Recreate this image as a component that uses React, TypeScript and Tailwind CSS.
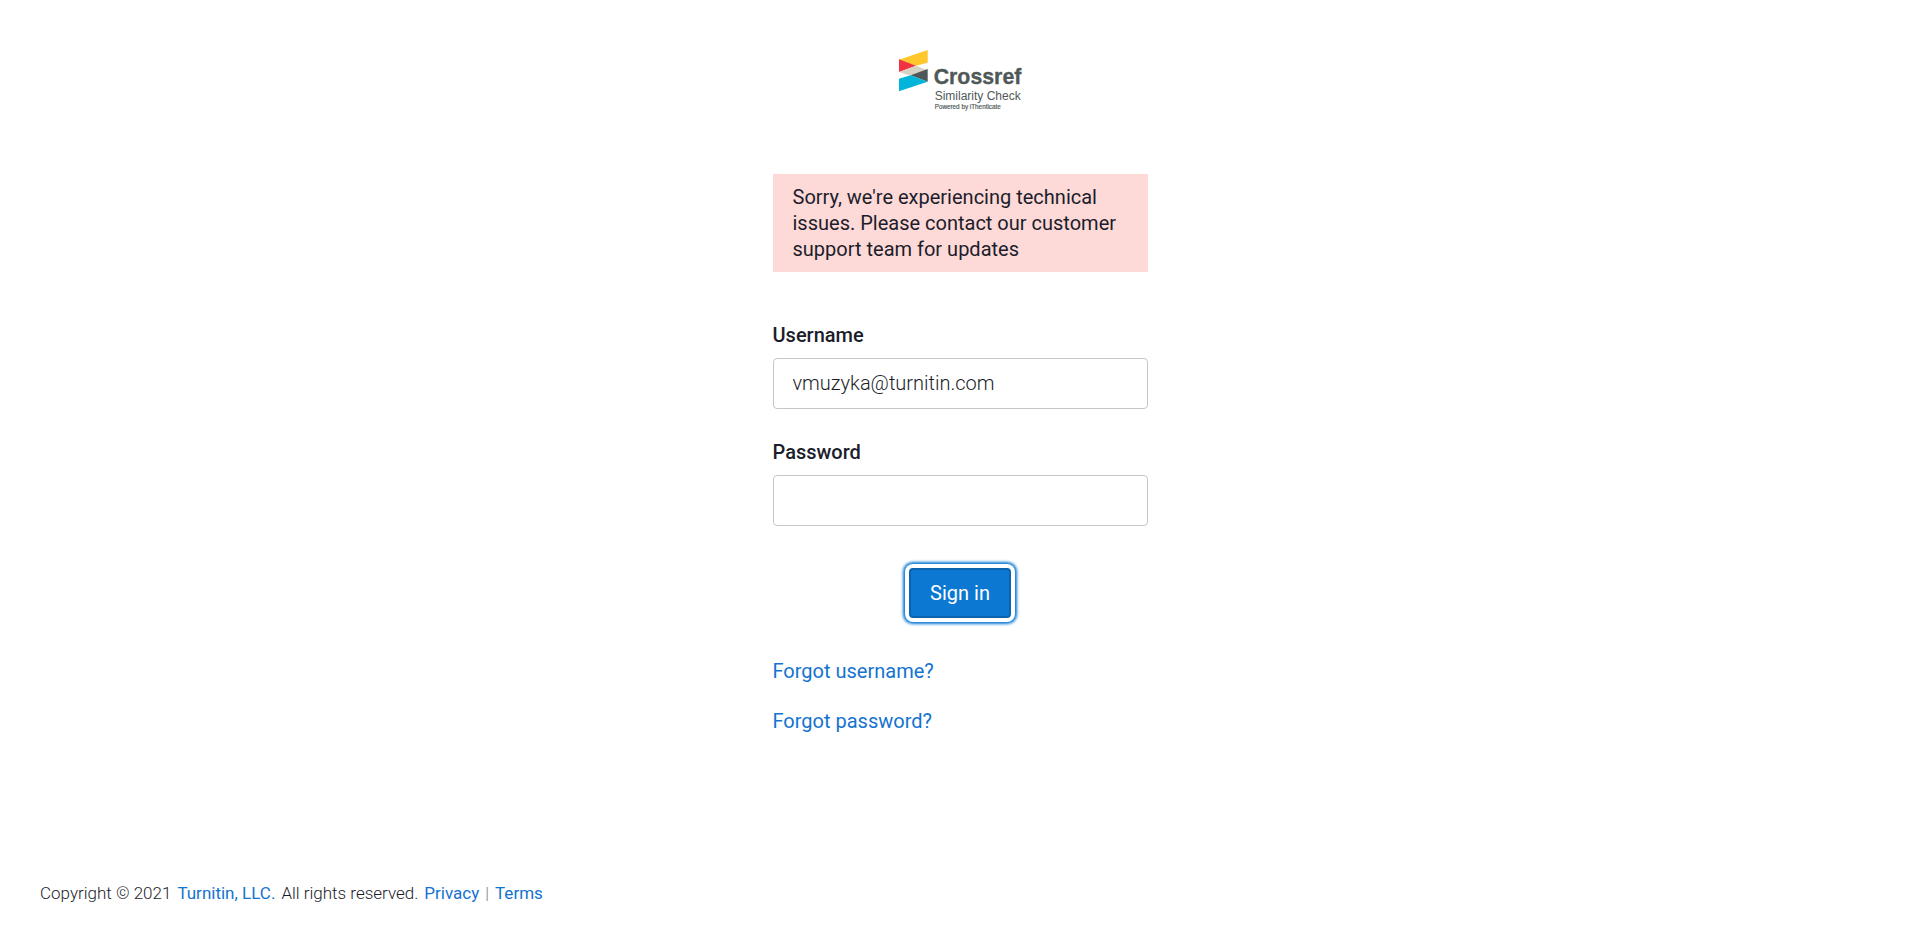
import { useState } from "react";

function Logo() {
  return (
    <svg
      role="img"
      aria-label="Crossref Similarity Check"
      className="h-[61px] w-[122px] overflow-visible"
      viewBox="57 27 366 183"
      fontFamily="'Liberation Sans', Arial, sans-serif"
      fill="#4f5858"
    >
      <path fill="#ffc72c" d="M57 59 143 30v38l-35 9z" />
      <path fill="#ef3340" d="M57 58 108 77 57 96z" />
      <path fill="#d8d2c4" d="M108 77 143 91 92 107 57 96z" />
      <path fill="#4f5858" d="M143 87v38L92 106z" />
      <path fill="#00b5d9" d="M92 106 143 125 57 154v-38z" />
      <text x="161" y="131" fontSize="64" fontWeight="700" stroke="#4f5858" strokeWidth="1">
        Crossref
      </text>
      <text x="164" y="179" fontSize="36">
        Similarity Check
      </text>
      <text x="164" y="206" fontSize="19" stroke="#4f5858" strokeWidth="0.5">
        Powered by iThenticate
      </text>
    </svg>
  );
}

type FieldProps = {
  id: string;
  label: string;
  type: string;
  value: string;
  onChange: (value: string) => void;
};

function Field({ id, label, type, value, onChange }: FieldProps) {
  return (
    <div className="flex flex-col gap-2.5">
      <label htmlFor={id} className="text-[20px] leading-[26px] font-medium">
        {label}
      </label>
      <input
        id={id}
        type={type}
        value={value}
        onChange={(e) => onChange(e.target.value)}
        className="h-[51px] w-full rounded-[4px] border border-[#c5c6ca] bg-white px-[19px] pb-0.5 text-[20px] font-light outline-none"
      />
    </div>
  );
}

export default function App() {
  const [username, setUsername] = useState("vmuzyka@turnitin.com");
  const [password, setPassword] = useState("");

  return (
    <div className="flex min-h-screen flex-col justify-between bg-white font-[Roboto,sans-serif] text-[#1c1d2b]">
      <main className="mx-auto flex w-full max-w-[375px] flex-col pt-[49px]">
        <div className="flex justify-center">
          <Logo />
        </div>
        <p
          role="alert"
          className="mt-16 bg-[#fdd9d7] px-5 py-2.5 text-[20px] leading-[26px]"
        >
          Sorry, we're experiencing technical issues. Please contact our customer support team for
          updates
        </p>
        <form className="mt-[50px] flex flex-col gap-[30px]" onSubmit={(e) => e.preventDefault()}>
          <Field id="username" label="Username" type="text" value={username} onChange={setUsername} />
          <Field id="password" label="Password" type="password" value={password} onChange={setPassword} />
          <button
            type="submit"
            className="mx-auto mt-3 h-[50px] rounded-[4px] border-2 border-[#0c63ae] bg-[#0d78d2] px-[19px] text-[20px] text-white shadow-[0_0_0_4px_#fff,0_0_3px_6px_#0d78d2] outline-none"
          >
            Sign in
          </button>
        </form>
        <nav className="mt-10 flex flex-col items-start gap-6 text-[20px] leading-[26px] text-[#1473cf]">
          <a href="#username-help">Forgot username?</a>
          <a href="#password-help">Forgot password?</a>
        </nav>
      </main>
      <footer className="flex flex-wrap gap-x-1.5 px-10 pb-[37px] text-[17px] leading-[26px] font-light">
        <span>Copyright © 2021</span>{" "}
        <a href="#turnitin" className="font-normal text-[#1473cf]">
          Turnitin, LLC.
        </a>{" "}
        <span>All rights reserved.</span>{" "}
        <a href="#privacy" className="font-normal text-[#1473cf]">
          Privacy
        </a>{" "}
        <span className="text-[#7d7e88]">|</span>{" "}
        <a href="#terms" className="font-normal text-[#1473cf]">
          Terms
        </a>
      </footer>
    </div>
  );
}
